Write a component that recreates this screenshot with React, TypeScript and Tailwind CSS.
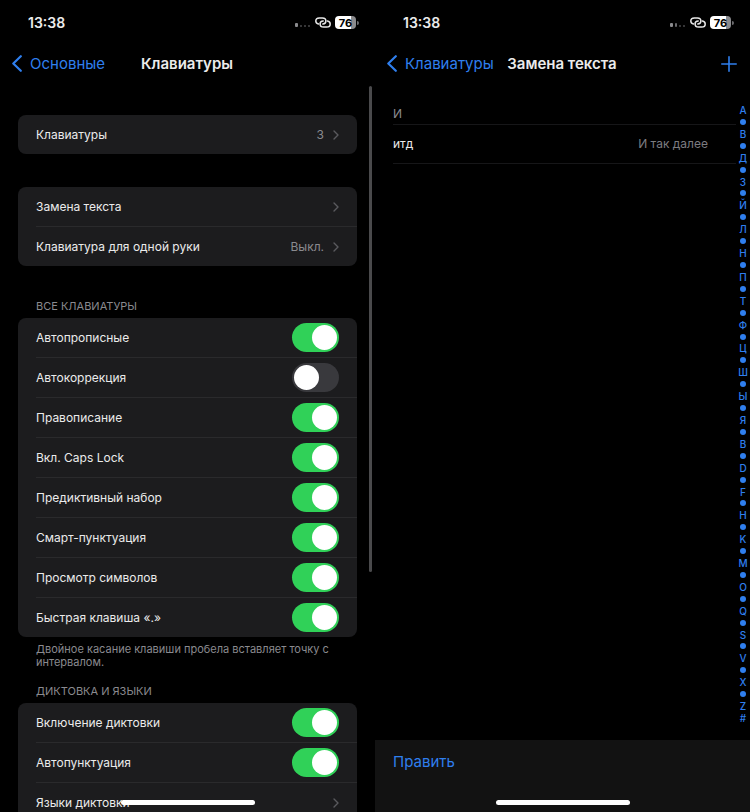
import { useState } from "react";
import type { ReactNode } from "react";

interface Option {
  id: string;
  label: string;
  on: boolean;
}

const keyboardOptions: Option[] = [
  { id: "autocaps", label: "Автопрописные", on: true },
  { id: "autocorrect", label: "Автокоррекция", on: false },
  { id: "spelling", label: "Правописание", on: true },
  { id: "capslock", label: "Вкл. Caps Lock", on: true },
  { id: "predictive", label: "Предиктивный набор", on: true },
  { id: "punctuation", label: "Смарт-пунктуация", on: true },
  { id: "preview", label: "Просмотр символов", on: true },
  { id: "shortcut", label: "Быстрая клавиша «.»", on: true },
];

const dictationOptions: Option[] = [
  { id: "dictation", label: "Включение диктовки", on: true },
  { id: "autopunct", label: "Автопунктуация", on: true },
];

const indexLetters = "АВДЗЙЛНПТФЦШЫЯBDFHKMOQSVXZ".split("");

function StatusBar({ bars }: { bars: number }) {
  return (
    <div className="flex h-[45px] shrink-0 items-center justify-between pl-7 pr-4">
      <span className="text-[14px] font-semibold leading-5">13:38</span>
      <div className="flex items-center gap-1">
        <svg width="17" height="8" viewBox="0 0 17 8" className="mt-1" aria-hidden="true">
          <rect x="1" y="2" width="3" height="4" rx="1" fill="#8a8a8d" />
          <rect x="6" y={bars > 1 ? 2 : 4} width="2" height={bars > 1 ? 4 : 2} rx="1" fill={bars > 1 ? "#6a6a6d" : "#48484a"} />
          <rect x="10" y="4" width="2" height="2" rx="1" fill="#48484a" />
          <rect x="14" y="4" width="2" height="2" rx="1" fill="#48484a" />
        </svg>
        <svg width="16" height="11" viewBox="0 0 16 11" fill="none" stroke="#e8e8e8" strokeWidth="1.5" strokeLinecap="round" aria-hidden="true">
          <path d="M3.6 6.9C1.9 6.6 .8 5.4 .8 4C.8 2.2 2.3 .9 4.3 .9H7.4C9.4 .9 10.9 2.2 10.9 4C10.9 5.7 9.6 6.9 7.8 6.9" />
          <path d="M12.4 4C14.1 4.3 15.2 5.5 15.2 6.9C15.2 8.7 13.7 10 11.7 10H8.6C6.6 10 5.1 8.7 5.1 6.9C5.1 5.2 6.4 4 8.2 4" />
        </svg>
        <div className="flex items-center gap-px">
          <span className="flex h-[13px] w-[21px] items-center justify-center rounded bg-linear-to-r from-white from-75% to-[#8a8a8d] to-75% text-[11px] font-bold leading-3 text-black">
            76
          </span>
          <span className="h-1 w-0.5 rounded-r bg-[#6a6a6d]" />
        </div>
      </div>
    </div>
  );
}

function NavBar({ back, title, action }: { back: string; title: string; action?: ReactNode }) {
  return (
    <header className="grid h-[41px] shrink-0 grid-cols-[1fr_auto_1fr] items-center pb-1 pl-3 pr-[13px]">
      <a href="#back" className="flex items-center gap-2 text-[15px] leading-5 text-[#2f7fee]">
        <svg width="10" height="17" viewBox="0 0 10 17" fill="none" stroke="currentColor" strokeWidth="2.2" strokeLinecap="round" strokeLinejoin="round" aria-hidden="true">
          <path d="M8.8 1.2L1.3 8.5L8.8 15.8" />
        </svg>
        {back}
      </a>
      <h1 className="text-[15px] font-semibold leading-5">{title}</h1>
      <div className="flex justify-end">{action}</div>
    </header>
  );
}

function Chevron() {
  return (
    <svg width="6" height="10" viewBox="0 0 6 10" fill="none" stroke="#5a5a5e" strokeWidth="1.4" strokeLinecap="round" strokeLinejoin="round" aria-hidden="true">
      <path d="M1 1L5 5L1 9" />
    </svg>
  );
}

function Card({ children }: { children: ReactNode }) {
  return <div className="overflow-hidden rounded-lg bg-[#1c1c1e] pl-[18px]">{children}</div>;
}

function LinkRow({ label, value }: { label: string; value?: string }) {
  return (
    <a href="#open" className="flex h-10 items-center border-t border-[#2a2a2c] pr-[18px] text-[12px] leading-5 first:h-[39px] first:border-t-0">
      <span className="flex-1">{label}</span>
      {value && <span className="mr-[9px] text-[#8a8a8f]">{value}</span>}
      <Chevron />
    </a>
  );
}

function SwitchRow({ option }: { option: Option }) {
  const [on, setOn] = useState(option.on);

  return (
    <div className="flex h-10 items-center border-t border-[#2a2a2c] pr-[18px] text-[12px] leading-5 first:h-[39px] first:border-t-0">
      <label htmlFor={option.id} className="flex-1">
        {option.label}
      </label>
      <input
        type="checkbox"
        role="switch"
        id={option.id}
        checked={on}
        onChange={(e) => setOn(e.target.checked)}
        className="flex h-[29px] w-[47px] cursor-pointer appearance-none items-center rounded-full bg-[#39393d] px-0.5 before:size-[25px] before:rounded-full before:bg-white checked:justify-end checked:bg-[#30d158]"
      />
    </div>
  );
}

function HomeIndicator() {
  return <div className="absolute bottom-[7px] left-1/2 h-[5px] w-[134px] -translate-x-1/2 rounded-full bg-white" />;
}

function KeyboardsScreen() {
  return (
    <section className="relative flex h-full min-w-0 flex-1 flex-col overflow-hidden">
      <StatusBar bars={1} />
      <NavBar back="Основные" title="Клавиатуры" />
      <main className="relative min-h-0 flex-1">
        <div className="h-full overflow-y-auto px-[18px] pb-10 pt-[29px] [scrollbar-width:none]">
          <Card>
            <LinkRow label="Клавиатуры" value="3" />
          </Card>

          <div className="mt-[33px]">
            <Card>
              <LinkRow label="Замена текста" />
              <LinkRow label="Клавиатура для одной руки" value="Выкл." />
            </Card>
          </div>

          <h2 className="mb-[5px] mt-[33px] pl-[18px] text-[11px] leading-[14px] text-[#8a8a8f]">ВСЕ КЛАВИАТУРЫ</h2>
          <Card>
            {keyboardOptions.map((o) => (
              <SwitchRow key={o.id} option={o} />
            ))}
          </Card>
          <p className="mt-1.5 px-[18px] text-[11px] leading-[13px] text-[#8a8a8f]">
            Двойное касание клавиши пробела вставляет точку с интервалом.
          </p>

          <h2 className="mb-[5px] mt-[15px] pl-[18px] text-[11px] leading-[14px] text-[#8a8a8f]">ДИКТОВКА И ЯЗЫКИ</h2>
          <Card>
            {dictationOptions.map((o) => (
              <SwitchRow key={o.id} option={o} />
            ))}
            <LinkRow label="Языки диктовки" />
          </Card>
        </div>
        <div className="absolute right-[3px] top-0 h-[67%] w-[3px] rounded-full bg-[#4a4a4c]" />
      </main>
      <HomeIndicator />
    </section>
  );
}

function ReplacementScreen() {
  return (
    <section className="relative flex h-full min-w-0 flex-1 flex-col overflow-hidden">
      <StatusBar bars={2} />
      <NavBar
        back="Клавиатуры"
        title="Замена текста"
        action={
          <button type="button" aria-label="Добавить" className="text-[#2f7fee]">
            <svg width="16" height="16" viewBox="0 0 16 16" fill="none" stroke="currentColor" strokeWidth="1.6" strokeLinecap="round" aria-hidden="true">
              <path d="M8 .8V15.2M.8 8H15.2" />
            </svg>
          </button>
        }
      />
      <main className="flex min-h-0 flex-1">
        <div className="min-w-0 flex-1 pl-[18px] pt-[18px]">
          <h2 className="border-b border-[#161618] pb-px text-[12px] leading-[19px] text-[#8a8a8f]">И</h2>
          <dl className="flex h-[39px] items-center justify-between border-b border-[#161618] pr-7 text-[12px] leading-5">
            <dt>итд</dt>
            <dd className="text-[#7c7c80]">И так далее</dd>
          </dl>
        </div>
        <nav aria-label="Указатель" className="flex w-[14px] flex-col items-center pb-4 pt-[18px] text-[10px] font-medium leading-3 text-[#2f7fee]">
          {indexLetters.map((letter) => (
            <div key={letter} className="flex min-h-0 flex-[2] flex-col items-center">
              <a href="#index" className="flex flex-1 items-center">
                {letter}
              </a>
              {letter !== "Z" ? (
                <span className="flex flex-1 items-center">
                  <span className="size-[6px] rounded-full bg-[#2f7fee]" />
                </span>
              ) : (
                <a href="#index" className="flex flex-1 items-center">
                  #
                </a>
              )}
            </div>
          ))}
        </nav>
      </main>
      <footer className="h-[72px] shrink-0 bg-[#121212] px-[18px] pt-[9px]">
        <button type="button" className="text-[15px] leading-5 text-[#2f7fee]">
          Править
        </button>
      </footer>
      <HomeIndicator />
    </section>
  );
}

export default function App() {
  return (
    <div className="flex h-screen bg-black font-[Inter,'Liberation_Sans',sans-serif] text-[#ebebeb]">
      <KeyboardsScreen />
      <ReplacementScreen />
    </div>
  );
}
